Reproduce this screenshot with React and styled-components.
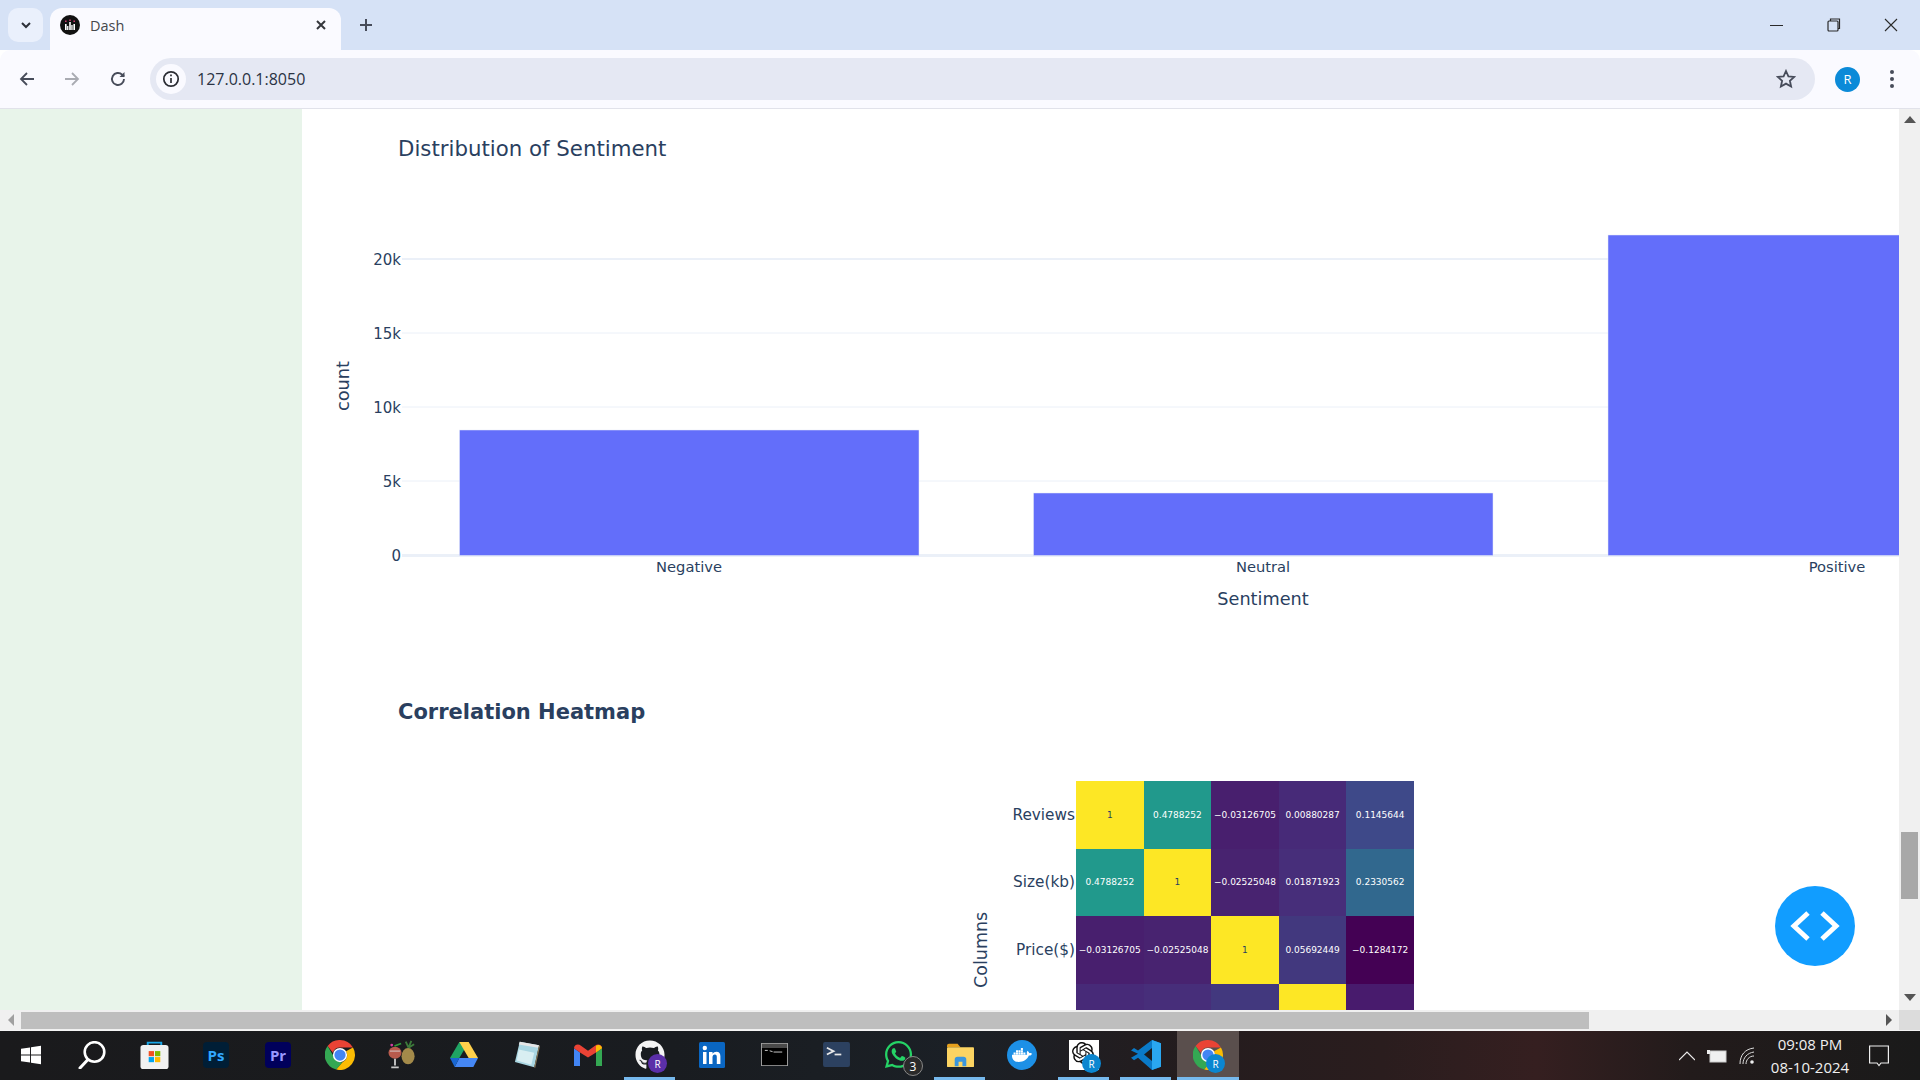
import React from "react";
import styled, { createGlobalStyle } from "styled-components";
import { FaGithub, FaWhatsapp, FaDocker } from "react-icons/fa";
import { SiOpenai } from "react-icons/si";

const GlobalStyle = createGlobalStyle`
  html, body { margin: 0; padding: 0; height: 100%; overflow: hidden; }
  #root { height: 100%; }
  * { box-sizing: border-box; }
`;

const Page = styled.div`
  width: 1920px;
  height: 1080px;
  display: flex;
  flex-direction: column;
  overflow: hidden;
  font-family: "DejaVu Sans", Verdana, sans-serif;
  background: #fff;
`;

/* browser chrome */
const TabStrip = styled.div`
  height: 50px;
  background: #d6e2f6;
  display: flex;
  align-items: flex-end;
  padding-left: 8px;
  flex: none;
`;
const TabList = styled.div`
  width: 35px;
  height: 34px;
  margin-bottom: 8px;
  border-radius: 10px;
  background: #eaf0fc;
  display: flex;
  align-items: center;
  justify-content: center;
`;
const Tab = styled.div`
  width: 291px;
  height: 42px;
  margin-left: 7px;
  padding: 0 13px 8px 10px;
  background: #fafaff;
  border-radius: 12px 12px 0 0;
  display: flex;
  align-items: center;
  gap: 10px;
  font: 14.5px "Open Sans", "Liberation Sans", sans-serif;
  color: #45474c;
`;
const TabTitle = styled.span`
  flex: 1;
`;
const NewTab = styled.div`
  width: 36px;
  height: 50px;
  margin-left: 7px;
  display: flex;
  align-items: center;
  justify-content: center;
`;
const WindowButtons = styled.div`
  margin-left: auto;
  height: 50px;
  display: flex;
  align-items: flex-start;
  padding: 17px 22px 0 0;
  gap: 43px;
`;
const Toolbar = styled.div`
  height: 58px;
  background: #fafaff;
  border-radius: 10px 10px 0 0;
  display: flex;
  align-items: center;
  padding: 0 16px 0 15px;
  flex: none;
`;
const NavButton = styled.div`
  width: 24px;
  height: 24px;
  margin-right: ${(p) => p.$gap || 21}px;
  display: flex;
  align-items: center;
  justify-content: center;
`;
const AddressBar = styled.div`
  width: 1665px;
  height: 42px;
  border-radius: 21px;
  background: #e5e8f3;
  display: flex;
  align-items: center;
  padding: 0 19px 0 6px;
`;
const InfoBadge = styled.div`
  width: 30px;
  height: 30px;
  border-radius: 50%;
  background: #fafaff;
  display: flex;
  align-items: center;
  justify-content: center;
`;
const Url = styled.span`
  margin-left: 11px;
  flex: 1;
  font: 16px "Open Sans", "Liberation Sans", sans-serif;
  color: #2a3344;
`;
const Avatar = styled.div`
  width: 25px;
  height: 25px;
  margin-left: 20px;
  border-radius: 50%;
  background: #0b8ad8;
  color: #fff;
  font: 13px "Open Sans", sans-serif;
  display: flex;
  align-items: center;
  justify-content: center;
`;
const MenuDots = styled.div`
  margin-left: 30px;
  width: 5px;
  display: flex;
  flex-direction: column;
  gap: 3px;
  span {
    width: 4px;
    height: 4px;
    border-radius: 50%;
    background: #474c5a;
  }
`;

/* page area */
const Viewport = styled.div`
  flex: 1;
  min-height: 0;
  display: flex;
  border-top: 1px solid #e1e2ea;
`;
const Sidebar = styled.aside`
  width: 302px;
  flex: none;
  background: #e8f4ea;
`;
const Main = styled.main`
  flex: 1;
  min-width: 0;
  overflow: hidden;
  position: relative;
  background: #fff;
`;
const ChartTitle = styled.h2`
  margin: 0;
  padding: 23px 0 0 96px;
  font-size: 21.3px;
  line-height: 33px;
  font-weight: 400;
  color: #2a3f5f;
`;
const BarSvg = styled.svg`
  display: block;
  width: 1597px;
  height: 465px;
  text {
    font-family: "DejaVu Sans", Verdana, sans-serif;
    fill: #2a3f5f;
  }
`;
const SectionTitle = styled.h3`
  margin: 65px 0 52px;
  padding-left: 96px;
  font-size: 21px;
  line-height: 34px;
  font-weight: 700;
  color: #2a3f5f;
`;
const Heatmap = styled.div`
  margin-left: 660px;
  display: flex;
  height: 338px;
`;
const AxisTitle = styled.div`
  width: 38px;
  display: flex;
  align-items: center;
  justify-content: center;
  writing-mode: vertical-rl;
  transform: rotate(180deg);
  font-size: 17.5px;
  color: #2a3f5f;
`;
const RowLabels = styled.div`
  width: 76px;
  display: grid;
  grid-auto-rows: 67.6px;
  padding-right: 1px;
`;
const RowLabel = styled.div`
  display: flex;
  align-items: center;
  justify-content: flex-end;
  font-size: 15.3px;
  color: #2a3f5f;
`;
const HeatGrid = styled.div`
  width: 338px;
  display: grid;
  grid-template-columns: repeat(5, 67.6px);
  grid-auto-rows: 67.6px;
`;
const HeatCell = styled.div`
  background: ${(p) => p.$bg};
  color: ${(p) => (p.$bg === "#fde725" ? "#2a3f5f" : "#fff")};
  font-size: 9px;
  display: flex;
  align-items: center;
  justify-content: center;
  white-space: nowrap;
`;
const DevButton = styled.div`
  position: absolute;
  left: 1473px;
  top: 777px;
  width: 80px;
  height: 80px;
  border-radius: 50%;
  background: #119dff;
  display: flex;
  align-items: center;
  justify-content: center;
`;

/* scrollbars */
const VScroll = styled.div`
  width: 21px;
  flex: none;
  background: #f0f0f0;
  display: flex;
  flex-direction: column;
  align-items: center;
  padding: 7px 0 8px;
`;
const VThumb = styled.div`
  width: 17px;
  height: 67px;
  margin-top: 708px;
  background: #a8a8a8;
`;
const DownArrow = styled.div`
  margin-top: auto;
  display: flex;
`;
const HScroll = styled.div`
  height: 20px;
  flex: none;
  background: #f0f0f0;
  display: flex;
  align-items: center;
`;
const HArrowBox = styled.div`
  width: 21px;
  display: flex;
  justify-content: center;
`;
const HThumb = styled.div`
  width: 1568px;
  height: 17px;
  background: #bebebe;
`;
const Corner = styled.div`
  margin-left: auto;
  display: flex;
  align-items: center;
  height: 20px;
`;
const CornerBox = styled.div`
  width: 21px;
  height: 20px;
  background: #dcdcdc;
`;

/* taskbar */
const Taskbar = styled.footer`
  height: 50px;
  flex: none;
  display: flex;
  align-items: center;
  border-top: 1px solid #f4f4f4;
  background: linear-gradient(90deg, #1a1a1c 0%, #191c20 35%, #1b2026 50%, #241c1e 62%, #2a1d1e 72%, #351f20 80%, #221b1b 88%, #1a1a1a 100%);
`;
const Slot = styled.div`
  position: relative;
  width: 62px;
  height: 49px;
  flex: none;
  padding-bottom: 2px;
  display: flex;
  align-items: center;
  justify-content: center;
  background: ${(p) => (p.$active ? "#5a4f4d" : "transparent")};
  &:first-child { width: 61px; }
  &::after {
    content: "";
    display: ${(p) => (p.$open || p.$active ? "block" : "none")};
    position: absolute;
    bottom: 0;
    left: ${(p) => (p.$active ? 0 : "5px")};
    right: ${(p) => (p.$active ? 0 : "6px")};
    height: 3px;
    background: #76b9ed;
  }
`;
const BadgeR = styled.span`
  position: absolute;
  right: 14px;
  bottom: 7px;
  width: 19px;
  height: 19px;
  border-radius: 50%;
  background: ${(p) => p.$bg || "#0b86d0"};
  color: #fff;
  font: 10px "Open Sans", sans-serif;
  display: flex;
  align-items: center;
  justify-content: center;
`;
const CountBadge = styled.span`
  position: absolute;
  right: 6px;
  bottom: 4px;
  width: 20px;
  height: 20px;
  border-radius: 50%;
  background: #2a2a2a;
  border: 1px solid #888;
  color: #fff;
  font: 12px "Open Sans", sans-serif;
  display: flex;
  align-items: center;
  justify-content: center;
`;
const AppTile = styled.div`
  width: 26px;
  height: 26px;
  border-radius: 4px;
  background: ${(p) => p.$bg};
  color: ${(p) => p.$fg};
  font: 700 15px "Open Sans", sans-serif;
  display: flex;
  align-items: center;
  justify-content: center;
`;
const Tray = styled.div`
  margin-left: auto;
  height: 49px;
  display: flex;
  align-items: center;
`;
const TrayIcon = styled.div`
  margin-right: ${(p) => p.$gap}px;
  display: flex;
`;
const Clock = styled.div`
  width: 80px;
  margin-right: 19px;
  text-align: center;
  white-space: nowrap;
  font: 15px/23px "Open Sans", sans-serif;
  color: #f0f0f0;
`;

const DashFavicon = () => (
  <svg width="20" height="20" viewBox="0 0 20 20">
    <circle cx="10" cy="10" r="10" fill="#111" />
    <path d="M5 9h1.6v6H5zM9.2 7h1.6v8H9.2zM13.4 9H15v6h-1.6z" fill="#fff" />
    <path d="M7.1 11h1.3v4H7.1zM11.3 10h1.3v5h-1.3z" fill="#fff" />
    <path d="M5 5.5h1.6V7H5zM9.2 4.5h1.6V6H9.2zM13.4 5.5H15V7h-1.6z" fill="#c2376b" />
  </svg>
);

const ChromeIcon = ({ size = 30 }) => (
  <svg width={size} height={size} viewBox="4 4 40 40">
    <path d="M24 4a20 20 0 0 1 17.3 10H24a10 10 0 0 0-9.5 7L7.5 12A20 20 0 0 1 24 4z" fill="#ea4335" />
    <path d="M7.5 12l8.7 15a10 10 0 0 0 11.5 6.3L19 43.4A20 20 0 0 1 7.5 12z" fill="#34a853" />
    <path d="M41.3 14A20 20 0 0 1 19 43.4l8.7-10A10 10 0 0 0 32 19l9.3-5z" fill="#fbbc04" />
    <circle cx="24" cy="24" r="9.5" fill="#fff" />
    <circle cx="24" cy="24" r="7.5" fill="#4285f4" />
  </svg>
);

const taskIcons = [
  {
    key: "start",
    node: (
      <svg width="20" height="20" viewBox="0 0 21 24" preserveAspectRatio="none">
        <path d="M0 4.5l9.5-1.5v8.5H0zM10.5 2.8L21 1v10.5H10.5zM0 12.5h9.5V21L0 19.5zM10.5 12.5H21V23l-10.5-1.8z" fill="#fff" />
      </svg>
    ),
  },
  {
    key: "search",
    node: (
      <svg width="28" height="28" viewBox="0 0 28 28" fill="none" stroke="#fff">
        <circle cx="16.500" cy="11" r="9.800" strokeWidth="2.600" />
        <path d="M9.500 19L2 27" strokeWidth="3" strokeLinecap="round" />
      </svg>
    ),
  },
  {
    key: "store",
    node: (
      <svg width="29" height="29" viewBox="0 0 30 34" preserveAspectRatio="none">
        <path d="M8 8V3h14v5" fill="none" stroke="#1aa7e8" strokeWidth="2" />
        <rect x="0.5" y="6" width="29" height="28" rx="3" fill="#f1f1f1" />
        <rect x="9" y="13" width="5.5" height="6" fill="#f25022" />
        <rect x="15.5" y="13" width="5.5" height="6" fill="#7fba00" />
        <rect x="9" y="20" width="5.5" height="6" fill="#00a4ef" />
        <rect x="15.5" y="20" width="5.5" height="6" fill="#ffb900" />
      </svg>
    ),
  },
  { key: "ps", node: <AppTile $bg="#001e36" $fg="#31a8ff">Ps</AppTile> },
  { key: "pr", node: <AppTile $bg="#00005b" $fg="#9999ff">Pr</AppTile> },
  { key: "chrome", node: <ChromeIcon /> },
  {
    key: "handbrake",
    node: (
      <svg width="28" height="29" viewBox="0 0 30 34" preserveAspectRatio="none">
        <path d="M22 9l-3-7M22 9l3-8M22 9l6-4" stroke="#3c7a3a" strokeWidth="2" />
        <ellipse cx="21.500" cy="19" rx="7" ry="9.500" fill="#a38a4a" />
        <circle cx="7.500" cy="15" r="7" fill="#b85a4c" />
        <path d="M2 13h11" stroke="#d9d9d9" strokeWidth="1" />
        <path d="M7.500 22v8M3.500 32h8" stroke="#c8c8c8" strokeWidth="2" />
        <circle cx="4" cy="6" r="1.500" fill="#d33ca0" />
        <path d="M7 7l7-3" stroke="#2e9a3a" strokeWidth="2" />
      </svg>
    ),
  },
  {
    key: "drive",
    node: (
      <svg width="28" height="25" viewBox="0 0 30 28" preserveAspectRatio="none">
        <path d="M10 0h10L10 18H0z" fill="#1fa463" />
        <path d="M20 0l10 18H20L10 0z" fill="#ffd04b" />
        <path d="M10 18h20l-5 10H5z" fill="#4587f4" />
        <path d="M0 18h10L5 28z" fill="#1967d2" />
      </svg>
    ),
  },
  {
    key: "notepad",
    node: (
      <svg width="27" height="27" viewBox="0 0 28 32" preserveAspectRatio="none">
        <path d="M7 1l20 4-5 26-20-6z" fill="#a9d6e2" />
        <path d="M7 1l20 4-1 3-20-4z" fill="#e5e5e5" />
        <path d="M6 10l16 4-3 14-15-5z" fill="#d8eef2" />
        <path d="M27 5l1 1-5 26-1-1z" fill="#8a7a5a" />
      </svg>
    ),
  },
  {
    key: "gmail",
    node: (
      <svg width="28" height="22" viewBox="0 0 28 26" preserveAspectRatio="none">
        <path d="M0 5v21h6V10z" fill="#4285f4" />
        <path d="M22 10v16h6V5z" fill="#34a853" />
        <path d="M0 5c0-4 4-6 7-3l7 6 7-6c3-3 7-1 7 3l-6 5-8 6-8-6z" fill="#ea4335" />
        <path d="M22 10V2c3-2 6 0 6 3z" fill="#fbbc04" />
      </svg>
    ),
  },
  {
    key: "github",
    open: true,
    node: (
      <>
        <FaGithub size={30} color="#f4f4f4" />
        <BadgeR $bg="#5b2fa8">R</BadgeR>
      </>
    ),
  },
  {
    key: "linkedin",
    node: (
      <svg width="26" height="26" viewBox="0 0 26 26">
        <rect width="26" height="26" rx="1.500" fill="#0a66c2" />
        <path d="M4 10h3.500v12H4zM10 10h3.500v1.700c.9-1.300 2.200-2 3.900-2 2.900 0 4 1.900 4 4.600V22h-3.600v-6.800c0-1.400-.4-2.600-1.900-2.600-1.600 0-2.400 1.200-2.400 2.700V22H10z" fill="#fff" />
        <circle cx="5.800" cy="6" r="2.200" fill="#fff" />
      </svg>
    ),
  },
  {
    key: "cmd",
    node: (
      <svg width="27" height="23" viewBox="0 0 28 28" preserveAspectRatio="none">
        <rect width="28" height="28" fill="#a0a0a0" />
        <rect x="1" y="1" width="26" height="5" fill="#4a4a4a" />
        <rect x="1" y="6" width="26" height="21" fill="#000" />
        <path d="M4 9h3M9 9.500l3 1M13 11h9" stroke="#ddd" strokeWidth="1" />
      </svg>
    ),
  },
  {
    key: "powershell",
    node: (
      <svg width="27" height="25" viewBox="0 0 28 26">
        <rect width="28" height="26" rx="2" fill="#2c4160" />
        <path d="M4 6l7 3.500L4 13" fill="none" stroke="#e8e8e8" strokeWidth="1.800" />
        <path d="M12 13h7" stroke="#e8e8e8" strokeWidth="1.800" />
      </svg>
    ),
  },
  {
    key: "whatsapp",
    node: (
      <>
        <FaWhatsapp size={31} color="#25d366" />
        <CountBadge>3</CountBadge>
      </>
    ),
  },
  {
    key: "explorer",
    open: true,
    node: (
      <svg width="27" height="24" viewBox="0 0 28 28" preserveAspectRatio="none">
        <path d="M0 3a2 2 0 0 1 2-2h9l3 4h-14z" fill="#e6a11d" />
        <rect y="5" width="28" height="23" rx="1" fill="#fcd462" />
        <path d="M8 27V19a3 3 0 0 1 3-3h6a3 3 0 0 1 3 3v8h-4v-5h-4v5z" fill="#3a96dd" />
      </svg>
    ),
  },
  {
    key: "docker",
    node: (
      <svg width="30" height="30" viewBox="0 0 30 30">
        <circle cx="15" cy="15" r="15" fill="#1d90e6" />
        <foreignObject x="5" y="5" width="20" height="20">
          <FaDocker size={20} color="#fff" />
        </foreignObject>
      </svg>
    ),
  },
  {
    key: "chatgpt",
    open: true,
    node: (
      <svg width="30" height="30" viewBox="0 0 30 30">
        <rect width="30" height="30" fill="#fff" />
        <foreignObject x="3" y="2" width="22" height="22">
          <SiOpenai size={22} color="#111" />
        </foreignObject>
      </svg>
    ),
    extra: <BadgeR>R</BadgeR>,
  },
  {
    key: "vscode",
    open: true,
    node: (
      <svg width="30" height="30" viewBox="0 0 30 37" preserveAspectRatio="none">
        <path d="M21 0l9 4v29l-9 4L7 22l-4 3-3-3 7-5-7-4 3-3 4 3z" fill="#0a7ac8" />
        <path d="M21 0l9 4v29l-9 4z" fill="#2aa7f0" />
        <path d="M21 10l-8 8 8 8z" fill="#1c1c1e" />
      </svg>
    ),
  },
  {
    key: "chrome-active",
    active: true,
    node: <ChromeIcon size={30} />,
    extra: <BadgeR>R</BadgeR>,
  },
];

const heatRows = [
  { label: "Reviews", cells: [["1", "#fde725"], ["0.4788252", "#21998c"], ["−0.03126705", "#481f6e"], ["0.00880287", "#472a78"], ["0.1145644", "#3e4989"]] },
  { label: "Size(kb)", cells: [["0.4788252", "#21998c"], ["1", "#fde725"], ["−0.02525048", "#482370"], ["0.01871923", "#472e7a"], ["0.2330562", "#31688e"]] },
  { label: "Price($)", cells: [["−0.03126705", "#481f6e"], ["−0.02525048", "#482370"], ["1", "#fde725"], ["0.05692449", "#42387e"], ["−0.1284172", "#440154"]] },
  { label: "", cells: [["", "#472a78"], ["", "#472e7a"], ["", "#42387e"], ["", "#fde725"], ["", "#481b6d"]] },
];

const ticks = [
  ["20k", 259],
  ["15k", 333],
  ["10k", 407],
  ["5k", 481],
];
const bars = [
  { name: "Negative", x: 459.5, w: 459.5, y: 430, cx: 689 },
  { name: "Neutral", x: 1033.5, w: 459.5, y: 493, cx: 1263 },
  { name: "Positive", x: 1608, w: 460, y: 235, cx: 1837 },
];

const BarChart = () => (
  <BarSvg viewBox="302 165 1597 465">
    {ticks.map(([label, y]) => (
      <g key={label}>
        <line x1="402" x2="1899" y1={y} y2={y} stroke="#ebf0f8" strokeWidth={label === "20k" ? 2 : 1} />
        <text x="401" y={y + 5.5} fontSize="15" textAnchor="end">{label}</text>
      </g>
    ))}
    <line x1="402" x2="1899" y1="555.500" y2="555.500" stroke="#ebf0f8" strokeWidth="3" />
    <text x="401" y="560.500" fontSize="15" textAnchor="end">0</text>
    {bars.map((b) => (
      <g key={b.name}>
        <rect x={b.x} y={b.y} width={b.w} height={555.5 - b.y} fill="#636efa" stroke="#e5ecf6" strokeWidth="0.5" />
        <text x={b.cx} y="572" fontSize="14.700" textAnchor="middle">{b.name}</text>
      </g>
    ))}
    <text x="1263" y="604.500" fontSize="17.700" textAnchor="middle">Sentiment</text>
    <text transform="translate(349 386) rotate(-90)" fontSize="17.800" textAnchor="middle">count</text>
  </BarSvg>
);

export default function App() {
  return (
    <Page>
      <GlobalStyle />
      <TabStrip>
        <TabList>
          <svg width="14" height="14" viewBox="0 0 14 14" fill="none" stroke="#2c3038" strokeWidth="2"><path d="M3 5l4 4 4-4" /></svg>
        </TabList>
        <Tab>
          <DashFavicon />
          <TabTitle>Dash</TabTitle>
          <svg width="14" height="14" viewBox="0 0 14 14" stroke="#34363c" strokeWidth="2"><path d="M3 3l8 8M11 3l-8 8" /></svg>
        </Tab>
        <NewTab>
          <svg width="16" height="16" viewBox="0 0 16 16" stroke="#474c5a" strokeWidth="2"><path d="M8 2v12M2 8h12" /></svg>
        </NewTab>
        <WindowButtons>
          <svg width="14" height="16" viewBox="0 0 14 16" stroke="#2a2a2a" strokeWidth="1" fill="none"><path d="M0 8.500h13" /></svg>
          <svg width="14" height="16" viewBox="0 0 14 16" stroke="#2a2a2a" strokeWidth="1.200" fill="none"><rect x="1" y="4" width="10" height="10" rx="1" /><path d="M3.500 4V2h9v9.500H11" /></svg>
          <svg width="14" height="16" viewBox="0 0 14 16" stroke="#2a2a2a" strokeWidth="1.100" fill="none"><path d="M1 2l12 12M13 2L1 14" /></svg>
        </WindowButtons>
      </TabStrip>
      <Toolbar>
        <NavButton>
          <svg width="18" height="18" viewBox="0 0 18 18" fill="none" stroke="#474c5a" strokeWidth="1.800"><path d="M16 9H3M9 3L3 9l6 6" /></svg>
        </NavButton>
        <NavButton $gap={22}>
          <svg width="18" height="18" viewBox="0 0 18 18" fill="none" stroke="#a9abb2" strokeWidth="1.800"><path d="M2 9h13M9 3l6 6-6 6" /></svg>
        </NavButton>
        <NavButton $gap={20}>
          <svg width="18" height="18" viewBox="0 0 18 18" fill="none" stroke="#474c5a" strokeWidth="1.900"><path d="M15 9a6 6 0 1 1-1.800-4.300L15 6.500" /><path d="M15.500 2v5h-5" fill="#474c5a" stroke="none" /></svg>
        </NavButton>
        <AddressBar>
          <InfoBadge>
            <svg width="18" height="18" viewBox="0 0 18 18" fill="none" stroke="#2a2c33" strokeWidth="1.700"><circle cx="9" cy="9" r="7.200" /><path d="M9 8v5" /><path d="M9 4.500v1.800" /></svg>
          </InfoBadge>
          <Url>127.0.0.1:8050</Url>
          <svg width="20" height="20" viewBox="0 0 20 20" fill="none" stroke="#474c5a" strokeWidth="1.800"><path d="M10 2l2.400 5.300 5.800.6-4.300 3.900 1.200 5.700-5.100-2.900-5.100 2.900 1.200-5.700L1.800 7.900l5.800-.6z" /></svg>
        </AddressBar>
        <Avatar>R</Avatar>
        <MenuDots><span /><span /><span /></MenuDots>
      </Toolbar>

      <Viewport>
        <Sidebar />
        <Main>
          <ChartTitle>Distribution of Sentiment</ChartTitle>
          <BarChart />
          <SectionTitle>Correlation Heatmap</SectionTitle>
          <Heatmap>
            <AxisTitle>Columns</AxisTitle>
            <RowLabels>
              {heatRows.map((r) => (
                <RowLabel key={r.label}>{r.label}</RowLabel>
              ))}
            </RowLabels>
            <HeatGrid>
              {heatRows.map((r) =>
                r.cells.map(([text, bg], i) => (
                  <HeatCell key={r.label + i} $bg={bg}>{text}</HeatCell>
                ))
              )}
            </HeatGrid>
          </Heatmap>
          <DevButton>
            <svg width="52" height="32" viewBox="0 0 52 32" fill="none" stroke="#fff" strokeWidth="5"><path d="M19 3L5 16l14 13M33 3l14 13-14 13" /></svg>
          </DevButton>
        </Main>
        <VScroll>
          <svg width="14" height="8" viewBox="0 0 14 8"><path d="M7 0l6 7H1z" fill="#555" /></svg>
          <VThumb />
          <DownArrow>
            <svg width="14" height="8" viewBox="0 0 14 8"><path d="M1 0h12L7 7z" fill="#555" /></svg>
          </DownArrow>
        </VScroll>
      </Viewport>
      <HScroll>
        <HArrowBox>
          <svg width="8" height="14" viewBox="0 0 8 14"><path d="M7 1v12L1 7z" fill="#a0a0a0" /></svg>
        </HArrowBox>
        <HThumb />
        <Corner>
          <HArrowBox>
            <svg width="8" height="14" viewBox="0 0 8 14"><path d="M1 1v12l6-6z" fill="#555" /></svg>
          </HArrowBox>
          <CornerBox />
        </Corner>
      </HScroll>

      <Taskbar>
        {taskIcons.map((t) => (
          <Slot key={t.key} $open={t.open} $active={t.active}>
            {t.node}
            {t.extra}
          </Slot>
        ))}
        <Tray>
          <TrayIcon $gap={12}>
            <svg width="16" height="10" viewBox="0 0 16 10" fill="none" stroke="#eee" strokeWidth="1.200"><path d="M0 9l8-8 8 8" /></svg>
          </TrayIcon>
          <TrayIcon $gap={12}>
            <svg width="20" height="14" viewBox="0 0 20 14"><rect x="3" y="2" width="16" height="11" fill="#f0f0f0" stroke="#ccc" /><path d="M0 1h3v4H0z" fill="#eee" /></svg>
          </TrayIcon>
          <TrayIcon $gap={15}>
            <svg width="16" height="18" viewBox="0 0 16 18" fill="none" stroke="#ddd" strokeWidth="1"><path d="M1 17C1 8 6 2 15 1M4 17c0-6 4-11 11-12M7 17c0-4 3-8 8-8" /><circle cx="13" cy="15" r="1.800" fill="#eee" stroke="none" /></svg>
          </TrayIcon>
          <Clock>
            <div>09:08 PM</div>
            <div>08-10-2024</div>
          </Clock>
          <TrayIcon $gap={31}>
            <svg width="20" height="22" viewBox="0 0 20 22" fill="none" stroke="#eee" strokeWidth="1.200"><path d="M.6 1h18.800v17H12l-2 2.500L8 18H.6z" /></svg>
          </TrayIcon>
        </Tray>
      </Taskbar>
    </Page>
  );
}
